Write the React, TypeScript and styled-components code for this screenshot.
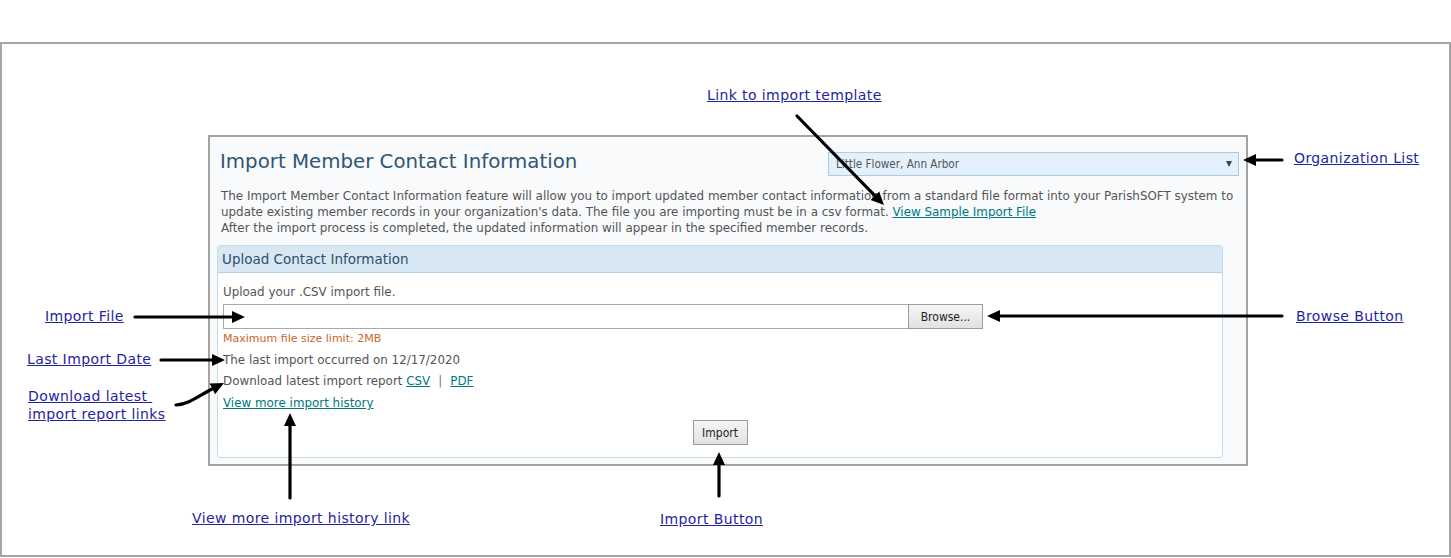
import React from "react";
import styled, { createGlobalStyle } from "styled-components";

const GlobalStyle = createGlobalStyle`
  html, body { margin: 0; padding: 0; background: #ffffff; }
  body { font-family: "DejaVu Sans", Verdana, sans-serif; }
  * { box-sizing: border-box; }
`;

const Page = styled.div`
  position: relative;
  width: 1451px;
  height: 558px;
  padding-top: 42px;
  overflow: hidden;
`;

const Frame = styled.div`
  width: 1451px;
  height: 515px;
  border: 2px solid #a6a6a6;
  padding: 91px 0 0 206px;
`;

const Panel = styled.section`
  width: 1040px;
  height: 331px;
  border: 2px solid #a3a3a3;
  background: #f8fafc;
  padding: 8px 22px 0 7px;
  display: flex;
  flex-direction: column;
`;

const HeaderRow = styled.div`
  display: flex;
  align-items: center;
  justify-content: space-between;
  height: 32px;
  padding-left: 3px;
`;

const Title = styled.h1`
  margin: 0;
  font-family: "DejaVu Sans", Verdana, sans-serif;
  font-weight: normal;
  font-size: 19.8px;
  color: #2f5674;
`;

const Select = styled.div`
  width: 411px;
  height: 24px;
  margin-right: -15px;
  margin-top: 5px;
  background: #e5f1fa;
  border: 1px solid #a9cde2;
  display: flex;
  align-items: center;
  justify-content: space-between;
  padding: 0 6px 0 7px;
  font-family: "DejaVu Sans Condensed", "DejaVu Sans", sans-serif;
  font-size: 11.6px;
  color: #4a5661;
`;

const Caret = styled.span`
  width: 0;
  height: 0;
  border-left: 3px solid transparent;
  border-right: 3px solid transparent;
  border-top: 6px solid #2a4a66;
`;

const Description = styled.p`
  margin: 11px 0 0 4px;
  font-size: 11.9px;
  line-height: 16px;
  color: #555555;
  white-space: nowrap;
`;

const TealLink = styled.a`
  color: #00787e;
  text-decoration: underline;
  cursor: pointer;
`;

const UploadBox = styled.div`
  margin-top: 9px;
  width: 1006px;
  height: 213px;
  border: 1px solid #c6dbe8;
  border-radius: 3px;
  background: #ffffff;
  display: flex;
  flex-direction: column;
`;

const UploadHeader = styled.div`
  height: 27px;
  background: #d7e8f4;
  border-bottom: 1px solid #b6d1e3;
  border-radius: 3px 3px 0 0;
  display: flex;
  align-items: center;
  padding-left: 4px;
  font-size: 13.5px;
  color: #2e4f6b;
`;

const UploadBody = styled.div`
  padding: 11px 0 0 5px;
  display: flex;
  flex-direction: column;
  font-size: 11.9px;
  color: #555555;
`;

const Line = styled.div<{ $gap?: number; $color?: string; $size?: number }>`
  margin-top: ${(p) => p.$gap ?? 0}px;
  line-height: 16px;
  color: ${(p) => p.$color ?? "#555555"};
  font-size: ${(p) => p.$size ?? 11.9}px;
`;

const FileRow = styled.div`
  display: flex;
  margin-top: 4px;
  height: 25px;
`;

const FileField = styled.div`
  width: 685px;
  height: 25px;
  border: 1px solid #a9a9a9;
  border-right: none;
  background: #ffffff;
`;

const Button = styled.button<{ $w: number }>`
  width: ${(p) => p.$w}px;
  height: 25px;
  border: 1px solid #9c9c9c;
  background: linear-gradient(#f6f6f6, #e1e1e1);
  font-family: "DejaVu Sans Condensed", "DejaVu Sans", sans-serif;
  font-size: 12px;
  color: #222;
  padding: 0;
`;

const Sep = styled.span`
  margin: 0 8px;
  color: #777;
`;

const ButtonRow = styled.div`
  display: flex;
  justify-content: center;
  margin-top: 9px;
  padding-right: 5px;
`;

const Note = styled.a<{ $x: number; $y: number }>`
  position: absolute;
  left: ${(p) => p.$x}px;
  top: ${(p) => p.$y}px;
  font-family: "DejaVu Sans", Verdana, sans-serif;
  font-size: 14px;
  letter-spacing: 0.4px;
  line-height: 18px;
  color: #1f24a0;
  text-decoration: underline;
  white-space: pre;
`;

const Overlay = styled.svg`
  position: absolute;
  left: 0;
  top: 0;
  pointer-events: none;
`;

type Arrow = { x1: number; y1: number; x2: number; y2: number };

const arrows: Arrow[] = [
  { x1: 797, y1: 116, x2: 884, y2: 205 },
  { x1: 1282, y1: 160, x2: 1243, y2: 160 },
  { x1: 135, y1: 317, x2: 245, y2: 317 },
  { x1: 1282, y1: 316, x2: 987, y2: 316 },
  { x1: 161, y1: 360, x2: 225, y2: 360 },
  { x1: 290, y1: 498, x2: 290, y2: 413 },
  { x1: 719, y1: 496, x2: 719, y2: 452 },
];

function head(x2: number, y2: number, ang: number) {
  const L = 13;
  const W = 6;
  const bx = x2 - L * Math.cos(ang);
  const by = y2 - L * Math.sin(ang);
  const px = -Math.sin(ang) * W;
  const py = Math.cos(ang) * W;
  return `${x2},${y2} ${bx + px},${by + py} ${bx - px},${by - py}`;
}

export default function App() {
  return (
    <>
      <GlobalStyle />
      <Page>
        <Frame>
          <Panel>
            <HeaderRow>
              <Title>Import Member Contact Information</Title>
              <Select>
                <span>Little Flower, Ann Arbor</span>
                <Caret />
              </Select>
            </HeaderRow>
            <Description>
              The Import Member Contact Information feature will allow you to import updated member contact
              information from a standard file format into your ParishSOFT system to
              <br />
              update existing member records in your organization's data. The file you are importing must be in a
              csv format. <TealLink>View Sample Import File</TealLink>
              <br />
              After the import process is completed, the updated information will appear in the specified member
              records.
            </Description>
            <UploadBox>
              <UploadHeader>Upload Contact Information</UploadHeader>
              <UploadBody>
                <Line>Upload your .CSV import file.</Line>
                <FileRow>
                  <FileField />
                  <Button $w={75}>Browse...</Button>
                </FileRow>
                <Line $gap={2} $color="#cc6428" $size={11}>
                  Maximum file size limit: 2MB
                </Line>
                <Line $gap={5}>The last import occurred on 12/17/2020</Line>
                <Line $gap={5}>
                  Download latest import report <TealLink>CSV</TealLink>
                  <Sep>|</Sep>
                  <TealLink>PDF</TealLink>
                </Line>
                <Line $gap={6}>
                  <TealLink>View more import history</TealLink>
                </Line>
                <ButtonRow>
                  <Button $w={55}>Import</Button>
                </ButtonRow>
              </UploadBody>
            </UploadBox>
          </Panel>
        </Frame>

        <Note $x={707} $y={86}>Link to import template</Note>
        <Note $x={1294} $y={149}>Organization List</Note>
        <Note $x={45} $y={307}>Import File</Note>
        <Note $x={1296} $y={307}>Browse Button</Note>
        <Note $x={27} $y={350}>Last Import Date</Note>
        <Note $x={28} $y={387}>{"Download latest \nimport report links"}</Note>
        <Note $x={192} $y={509}>View more import history link</Note>
        <Note $x={660} $y={510}>Import Button</Note>

        <Overlay width={1451} height={558} viewBox="0 0 1451 558">
          {arrows.map((a, i) => {
            const ang = Math.atan2(a.y2 - a.y1, a.x2 - a.x1);
            const ex = a.x2 - 10 * Math.cos(ang);
            const ey = a.y2 - 10 * Math.sin(ang);
            return (
              <g key={i}>
                <line x1={a.x1} y1={a.y1} x2={ex} y2={ey} stroke="#000" strokeWidth={3.2} strokeLinecap="round" />
                <polygon points={head(a.x2, a.y2, ang)} fill="#000" />
              </g>
            );
          })}
          <path d="M176 405 C 190 404 198 396 214 388" fill="none" stroke="#000" strokeWidth={3.2} strokeLinecap="round" />
          <polygon points={head(224, 383, Math.atan2(-6, 12))} fill="#000" />
        </Overlay>
      </Page>
    </>
  );
}
